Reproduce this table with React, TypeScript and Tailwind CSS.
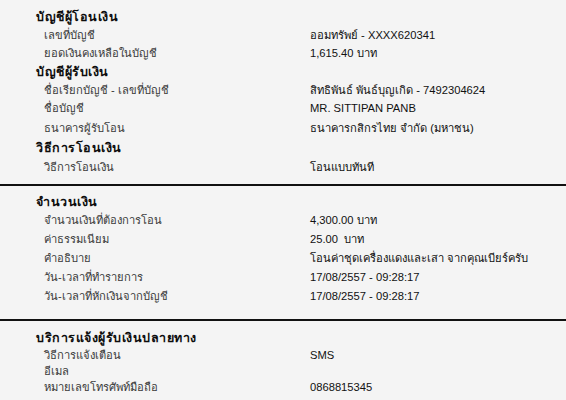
import React from "react";

type Row = { label: string; value?: string; h: string; header?: boolean };

function Line({ label, value, h, header }: Row) {
  return (
    <div className={`flex items-center ${h}`}>
      {header ? (
        <div className="pl-[36px] font-bold text-[12.5px] tracking-[0.5px] text-[#0d0d0d]">{label}</div>
      ) : (
        <>
          <div className="pl-[44px] w-[310px] shrink-0 text-[11.2px] text-[#3a3a3a]">{label}</div>
          <div className="text-[11.2px] text-[#111] whitespace-pre">{value}</div>
        </>
      )}
    </div>
  );
}

export default function App() {
  return (
    <div
      className="w-[566px] h-[400px] bg-[#f4f4f4] overflow-hidden"
      style={{ fontFamily: "Tahoma, 'Liberation Sans', 'Noto Sans', sans-serif" }}
    >
      <div className="pt-[8px] pb-[8px]">
        <Line header label="บัญชีผู้โอนเงิน" h="h-[18px]" />
        <Line label="เลขที่บัญชี" value="ออมทรัพย์ - XXXX620341" h="h-[18px]" />
        <Line label="ยอดเงินคงเหลือในบัญชี" value="1,615.40 บาท" h="h-[19px]" />
        <Line header label="บัญชีผู้รับเงิน" h="h-[18px]" />
        <Line label="ชื่อเรียกบัญชี - เลขที่บัญชี" value="สิทธิพันธ์ พันธ์บุญเกิด - 7492304624" h="h-[18px]" />
        <Line label="ชื่อบัญชี" value="MR. SITTIPAN PANB" h="h-[19px]" />
        <Line label="ธนาคารผู้รับโอน" value="ธนาคารกสิกรไทย จำกัด (มหาชน)" h="h-[20px]" />
        <Line header label="วิธีการโอนเงิน" h="h-[20px]" />
        <Line label="วิธีการโอนเงิน" value="โอนแบบทันที" h="h-[18px]" />
      </div>
      <div className="h-[2px] bg-[#111]" />
      <div className="pt-[7px] pb-[13px]">
        <Line header label="จำนวนเงิน" h="h-[18px]" />
        <Line label="จำนวนเงินที่ต้องการโอน" value="4,300.00 บาท" h="h-[19px]" />
        <Line label="ค่าธรรมเนียม" value="25.00  บาท" h="h-[19px]" />
        <Line label="คำอธิบาย" value="โอนค่าชุดเครื่องแดงและเสา จากคุณเบียร์ครับ" h="h-[19px]" />
        <Line label="วัน-เวลาที่ทำรายการ" value="17/08/2557 - 09:28:17" h="h-[19px]" />
        <Line label="วัน-เวลาที่หักเงินจากบัญชี" value="17/08/2557 - 09:28:17" h="h-[19px]" />
      </div>
      <div className="h-[2px] bg-[#111]" />
      <div className="pt-[8px]">
        <Line header label="บริการแจ้งผู้รับเงินปลายทาง" h="h-[18px]" />
        <Line label="วิธีการแจ้งเตือน" value="SMS" h="h-[17px]" />
        <Line label="อีเมล" value="" h="h-[15px]" />
        <Line label="หมายเลขโทรศัพท์มือถือ" value="0868815345" h="h-[16px]" />
      </div>
    </div>
  );
}
